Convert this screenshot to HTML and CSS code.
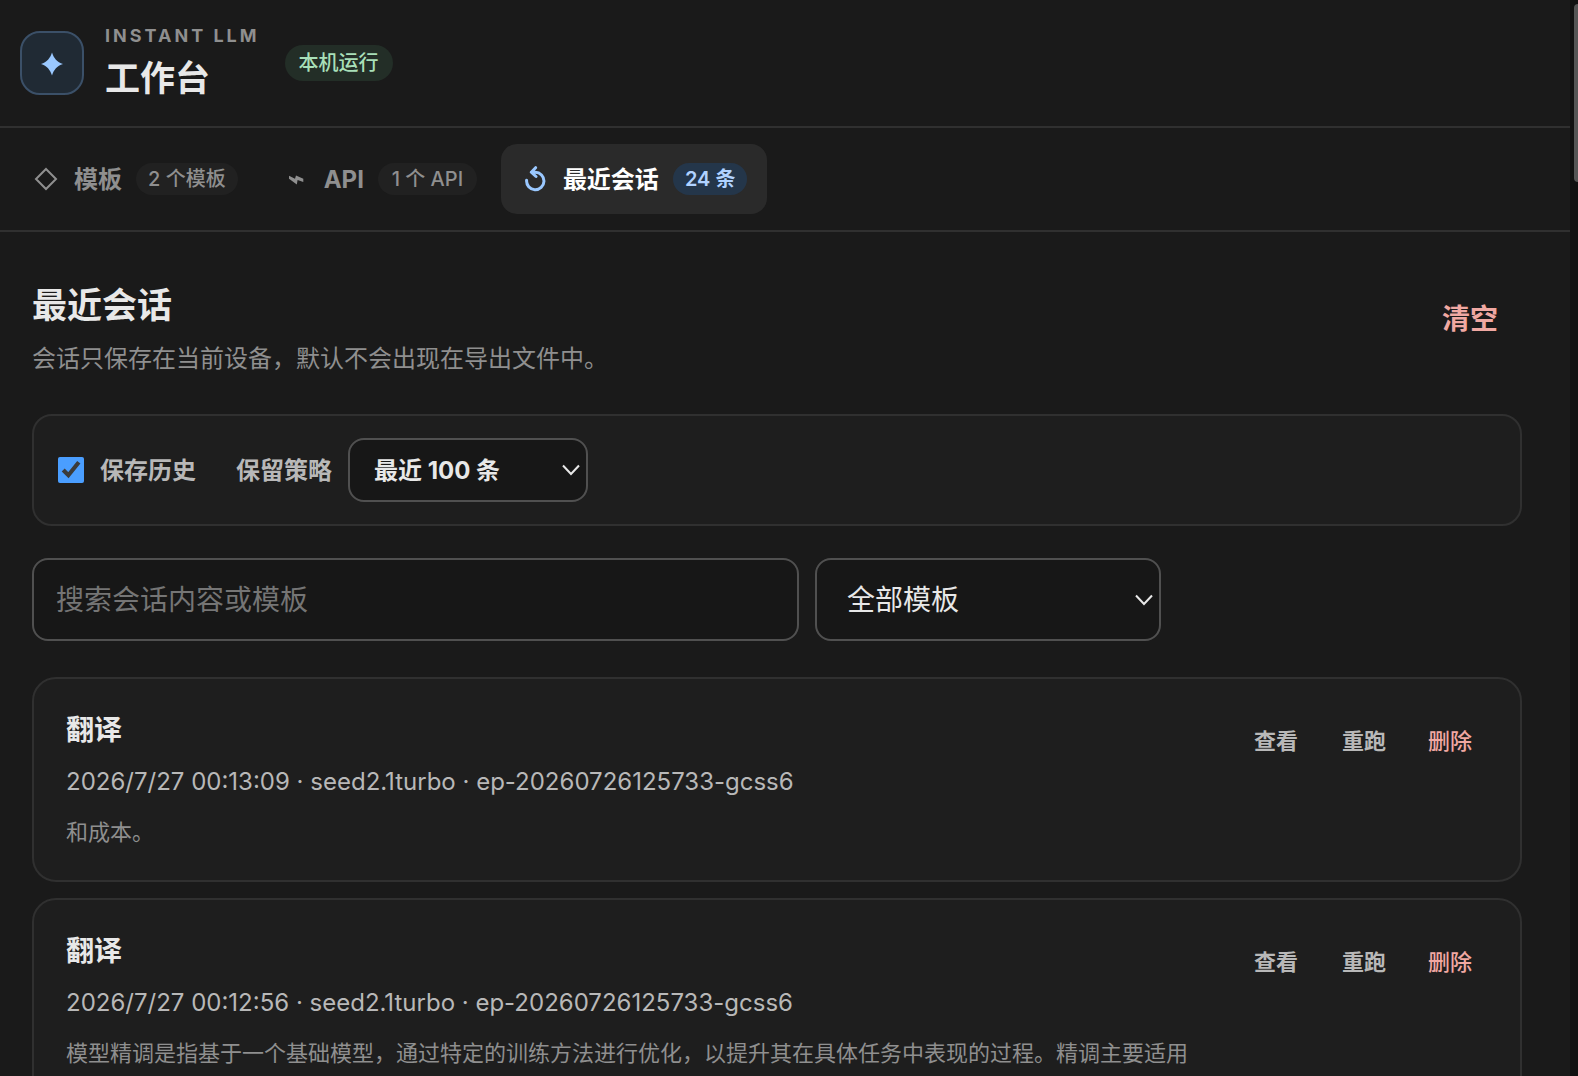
FILE: index.html
```html
<!DOCTYPE html>
<html lang="zh-CN">
<head>
<meta charset="utf-8">
<title>Instant LLM 工作台</title>
<link rel="stylesheet" href="styles.css">
</head>
<body>
<div class="app">
  <header class="topbar">
    <div class="logo">
      <svg width="24" height="26" viewBox="0 0 24 26" aria-hidden="true"><path d="M12 2.500C13.800 8.200 17 12 23 14 17 16 13.800 19.800 12 25.500 10.200 19.800 7 16 1 14 7 12 10.200 8.200 12 2.500Z" fill="#9ac8ff"/></svg>
    </div>
    <div class="brand">
      <span class="eyebrow">INSTANT LLM</span>
      <h1 class="heading">工作台</h1>
    </div>
    <span class="status">本机运行</span>
  </header>

  <nav class="tabs">
    <button class="tab" type="button">
      <span class="tab-icon"><svg width="24" height="24" viewBox="0 0 24 24" aria-hidden="true"><path d="M12 2 22 12 12 22 2 12Z" fill="none" stroke="currentColor" stroke-width="2"/></svg></span>
      <span class="label">模板</span>
      <span class="count">2 个模板</span>
    </button>
    <button class="tab" type="button">
      <span class="tab-icon"><svg width="24" height="24" viewBox="0 0 24 24" aria-hidden="true"><path d="M5 8.800 11 11.800 12 8.500 19.300 11.800V15L13.600 12.900 12.800 17.500 5 11.800Z" fill="currentColor"/></svg></span>
      API
      <span class="count count-wide">1 个 API</span>
    </button>
    <button class="tab tab-active" type="button" aria-current="page">
      <span class="tab-icon"><svg width="24" height="26" viewBox="0 0 24 26" aria-hidden="true"><path d="M3.600 14.300A8.700 8.700 0 1 0 12.300 6.300L8.300 6.200M12.600 1.700 8.300 6.200 13 10.500" fill="none" stroke="currentColor" stroke-width="3" stroke-linecap="round" stroke-linejoin="round"/></svg></span>
      <span class="label">最近会话</span>
      <span class="count count-active">24 条</span>
    </button>
  </nav>

  <main class="content">
    <section class="intro">
      <div>
        <h2 class="heading">最近会话</h2>
        <p class="lead">会话只保存在当前设备，默认不会出现在导出文件中。</p>
      </div>
      <button class="clear" type="button">清空</button>
    </section>

    <section class="settings">
      <div class="option">
        <input class="checkbox" id="save-history" type="checkbox" checked>
        <label class="label" for="save-history">保存历史</label>
      </div>
      <div class="option">
        <label class="label" for="policy">保留策略</label>
        <span class="select-wrap">
          <select class="field select-small" id="policy"><option>最近 100 条</option></select>
          <svg class="chevron" width="18" height="12" viewBox="0 0 18 12" aria-hidden="true"><path d="M1 1.500 9 10 17 1.500" fill="none" stroke="currentColor" stroke-width="2"/></svg>
        </span>
      </div>
    </section>

    <section class="filters">
      <input class="field search" type="search" placeholder="搜索会话内容或模板" aria-label="搜索会话内容或模板">
      <span class="select-wrap select-wide">
        <select class="field select-large" aria-label="模板"><option>全部模板</option></select>
        <svg class="chevron" width="18" height="12" viewBox="0 0 18 12" aria-hidden="true"><path d="M1 1.500 9 10 17 1.500" fill="none" stroke="currentColor" stroke-width="2"/></svg>
      </span>
    </section>

    <section class="sessions">
      <article class="card">
        <div class="card-body">
          <h3 class="card-title">翻译</h3>
          <p class="meta">2026/7/27 00:13:09 · seed2.1turbo · ep-20260726125733-gcss6</p>
          <p class="excerpt">和成本。</p>
        </div>
        <div class="actions">
          <button class="action" type="button">查看</button>
          <button class="action" type="button">重跑</button>
          <button class="action action-danger" type="button">删除</button>
        </div>
      </article>
      <article class="card">
        <div class="card-body">
          <h3 class="card-title">翻译</h3>
          <p class="meta">2026/7/27 00:12:56 · seed2.1turbo · ep-20260726125733-gcss6</p>
          <p class="excerpt">模型精调是指基于一个基础模型，通过特定的训练方法进行优化，以提升其在具体任务中表现的过程。精调主要适用</p>
        </div>
        <div class="actions">
          <button class="action" type="button">查看</button>
          <button class="action" type="button">重跑</button>
          <button class="action action-danger" type="button">删除</button>
        </div>
      </article>
    </section>
  </main>
</div>
<div class="scroll-track" aria-hidden="true"><div class="scroll-thumb"></div></div>
</body>
</html>
```
FILE: styles.css
```css
* { box-sizing: border-box; }

:root { color-scheme: dark; }

body {
  margin: 0;
  background: #1a1a1a;
  color: #e8e8e8;
  font-family: Inter, "Noto Sans CJK SC", sans-serif;
  font-size: 24px;
}

h1, h2, h3, p { margin: 0; }

button, input, select { font: inherit; color: inherit; margin: 0; }

button { border: 0; background: none; cursor: pointer; }

.app {
  height: 100vh;
  margin-right: 8px;
  overflow: hidden;
}

/* Header */
.topbar {
  display: flex;
  align-items: center;
  height: 128px;
  padding: 0 20px;
  border-bottom: 2px solid #303030;
}

.logo {
  display: grid;
  place-items: center;
  width: 64px;
  height: 64px;
  margin-right: 21px;
  border: 2px solid #3b5068;
  border-radius: 20px;
  background: #202a34;
}

.brand { display: flex; flex-direction: column; gap: 10px; }

.eyebrow {
  color: #8f8f8f;
  font-size: 18px;
  font-weight: 700;
  line-height: 20px;
  letter-spacing: 3px;
}

.heading {
  font-size: 35px;
  font-weight: 700;
  line-height: 44px;
}

.status {
  margin-left: 25px;
  padding: 0 14px;
  border-radius: 18px;
  background: #232e27;
  color: #a8dfb8;
  font-size: 20px;
  font-weight: 500;
  line-height: 36px;
}

/* Tabs */
.tabs {
  display: flex;
  align-items: center;
  gap: 4px;
  height: 104px;
  padding: 0 12px;
  border-bottom: 2px solid #303030;
}

.tab {
  display: flex;
  align-items: center;
  gap: 14px;
  height: 70px;
  padding: 0 20px;
  border-radius: 16px;
  color: #8f8f8f;
  font-weight: 700;
}

.tab-active { background: #2a2a2a; color: #fff; }

.tab-icon { display: grid; place-items: center; width: 28px; }

.tab-active .tab-icon { color: #9ac8ff; }

.label { padding-bottom: 4px; }

.count {
  padding: 0 12px;
  border-radius: 16px;
  background: #212121;
  font-size: 20px;
  font-weight: 500;
  line-height: 32px;
}

.count-wide { min-width: 99px; }

.tab-active .count-active { background: #24364a; color: #b0d2ff; font-weight: 600; }

/* Content */
.content { padding: 51px 48px 0 32px; }

.intro {
  display: flex;
  justify-content: space-between;
  align-items: flex-start;
  height: 131px;
}

.lead { margin-top: 15px; color: #8f8f8f; line-height: 34px; }

.clear {
  height: 68px;
  padding: 0 24px;
  color: #f0a8a2;
  font-size: 28px;
  font-weight: 700;
}

.settings {
  display: flex;
  align-items: center;
  gap: 40px;
  height: 112px;
  padding: 0 24px;
  border: 2px solid #303030;
  border-radius: 20px;
  background: #1e1e1e;
  color: #b8b8b8;
  font-weight: 700;
}

.option { display: flex; align-items: center; gap: 16px; }

.checkbox { width: 26px; height: 26px; accent-color: #4a9eff; }

.select-wrap { position: relative; display: flex; }

.chevron {
  position: absolute;
  right: 8px;
  top: 50%;
  margin-top: -6px;
  color: #e8e8e8;
  pointer-events: none;
}

.field {
  border: 2px solid #505050;
  border-radius: 16px;
  background: #171717;
  color: #e8e8e8;
  outline: 0;
  appearance: none;
}

.select-small { width: 240px; height: 64px; padding: 0 24px; }

.filters { display: flex; gap: 16px; margin: 32px 0 36px; }

.search {
  flex: 0 1 767px;
  min-width: 0;
  height: 83px;
  padding: 0 22px;
  font-size: 28px;
}

.search::placeholder { color: #757575; opacity: 1; }

.select-wide { width: 346px; }

.select-large { width: 100%; height: 83px; padding: 0 30px; font-size: 28px; }

.sessions { display: flex; flex-direction: column; gap: 16px; }

.card {
  display: flex;
  justify-content: space-between;
  gap: 28px;
  padding: 33px 32px 31px;
  border: 2px solid #303030;
  border-radius: 24px;
  background: #1e1e1e;
}

.card-body {
  display: flex;
  flex-direction: column;
  gap: 16px;
  min-width: 0;
}

.card-title { font-size: 28px; line-height: 36px; }

.meta { color: #b8b8b8; line-height: 36px; }

.excerpt { color: #8f8f8f; font-size: 22px; line-height: 33px; }

.actions { display: flex; flex: none; align-items: flex-start; gap: 12px; }

.action {
  height: 54px;
  padding: 0 16px;
  color: #b8b8b8;
  font-size: 22px;
  font-weight: 700;
}

.action-danger { padding-left: 14px; color: #f0a8a2; font-weight: 500; }

/* Scroll indicator */
.scroll-track {
  position: fixed;
  top: 0;
  right: 0;
  bottom: 0;
  width: 8px;
  padding: 4px 0 4px 4px;
  background: #111;
}

.scroll-thumb {
  height: 178px;
  border-radius: 4px 0 0 4px;
  background: #555;
}
```
